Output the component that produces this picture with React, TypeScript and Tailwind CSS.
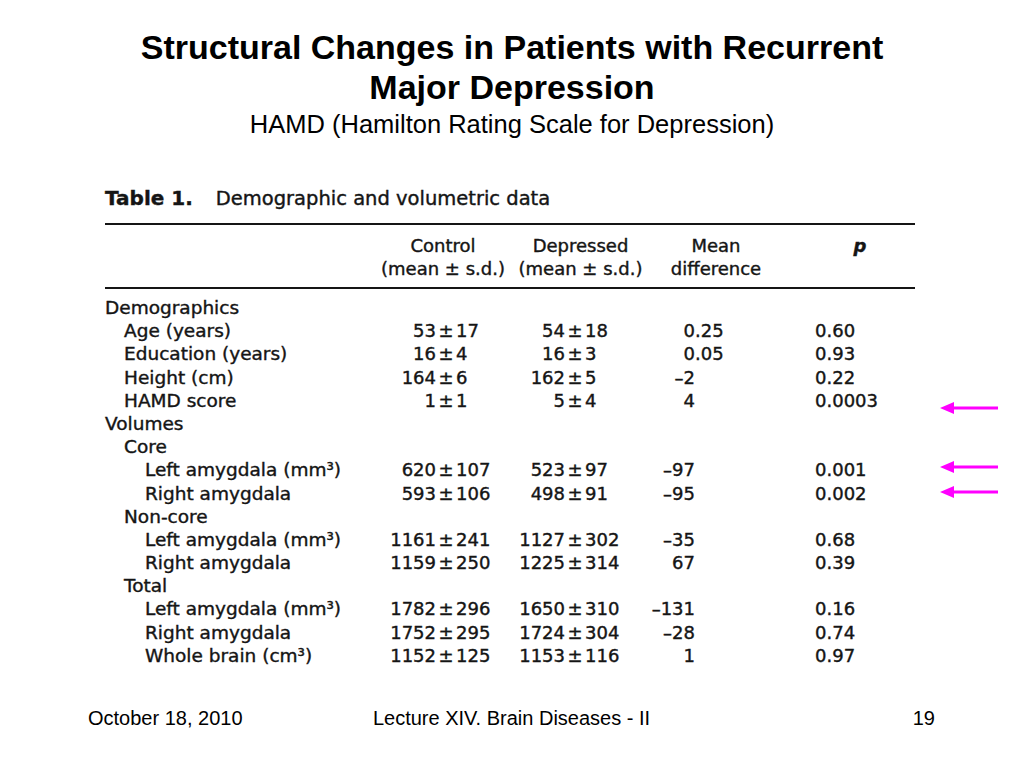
import React from "react";

type Row = {
  label: string;
  level: 0 | 1 | 2;
  c?: [string, string];
  d?: [string, string];
  m?: [string, string];
  p?: string;
};

const rows: Row[] = [
  { label: "Demographics", level: 0 },
  { label: "Age (years)", level: 1, c: ["53", "17"], d: ["54", "18"], m: ["0", ".25"], p: "0.60" },
  { label: "Education (years)", level: 1, c: ["16", "4"], d: ["16", "3"], m: ["0", ".05"], p: "0.93" },
  { label: "Height (cm)", level: 1, c: ["164", "6"], d: ["162", "5"], m: ["–2", ""], p: "0.22" },
  { label: "HAMD score", level: 1, c: ["1", "1"], d: ["5", "4"], m: ["4", ""], p: "0.0003" },
  { label: "Volumes", level: 0 },
  { label: "Core", level: 1 },
  { label: "Left amygdala (mm³)", level: 2, c: ["620", "107"], d: ["523", "97"], m: ["–97", ""], p: "0.001" },
  { label: "Right amygdala", level: 2, c: ["593", "106"], d: ["498", "91"], m: ["–95", ""], p: "0.002" },
  { label: "Non-core", level: 1 },
  { label: "Left amygdala (mm³)", level: 2, c: ["1161", "241"], d: ["1127", "302"], m: ["–35", ""], p: "0.68" },
  { label: "Right amygdala", level: 2, c: ["1159", "250"], d: ["1225", "314"], m: ["67", ""], p: "0.39" },
  { label: "Total", level: 1 },
  { label: "Left amygdala (mm³)", level: 2, c: ["1782", "296"], d: ["1650", "310"], m: ["–131", ""], p: "0.16" },
  { label: "Right amygdala", level: 2, c: ["1752", "295"], d: ["1724", "304"], m: ["–28", ""], p: "0.74" },
  { label: "Whole brain (cm³)", level: 2, c: ["1152", "125"], d: ["1153", "116"], m: ["1", ""], p: "0.97" },
];

const pad = ["pl-0", "pl-[19px]", "pl-[40px]"];

function Arrow() {
  return (
    <svg width="60" height="14" viewBox="0 0 60 14">
      <line x1="10" y1="7" x2="58" y2="7" stroke="#ff00ff" strokeWidth="3" />
      <polygon points="0,7 14,1 14,13" fill="#ff00ff" />
    </svg>
  );
}

export default function App() {
  return (
    <div className="relative w-[1024px] h-[768px] bg-white flex flex-col text-black overflow-hidden">
      <div className="pt-[27px] text-center font-['Liberation_Sans',Arial,sans-serif]">
        <h1 className="text-[34px] leading-[40px] font-bold">
          Structural Changes in Patients with Recurrent
          <br />
          Major Depression
        </h1>
        <p className="mt-[3px] text-[25.5px] leading-[28px]">
          HAMD (Hamilton Rating Scale for Depression)
        </p>
      </div>

      <div className="ml-[105px] w-[810px] mt-[49px] text-[18px] text-[#151515] font-['DejaVu_Sans',sans-serif] [-webkit-text-stroke:0.4px_#151515]">
        <div className="leading-[23px] whitespace-nowrap">
          <span className="font-bold text-[20px]">Table 1.</span>
          <span className="ml-[23px] text-[19.5px]">Demographic and volumetric data</span>
        </div>
        <div className="mt-[13px] h-[2px] bg-[#151515]" />

        <div className="flex pt-[9px] pb-[7px] leading-[23px] whitespace-nowrap">
          <div className="w-[268px]" />
          <div className="w-[140px] text-center">
            Control
            <br />
            (mean ± s.d.)
          </div>
          <div className="w-[135px] text-center">
            Depressed
            <br />
            (mean ± s.d.)
          </div>
          <div className="w-[12px]" />
          <div className="w-[112px] text-center">
            Mean
            <br />
            difference
          </div>
          <div className="ml-[58px] w-[60px] text-center italic font-bold">p</div>
        </div>
        <div className="h-[2px] bg-[#151515]" />

        <div className="pt-[7px]">
          {rows.map((r, i) => (
            <div key={i} className="flex leading-[23.2px] h-[23.2px] whitespace-nowrap">
              <div className={`w-[275px] text-[18.5px] ${pad[r.level]}`}>{r.label}</div>
              <div className="w-[135px] flex">
                {r.c && (
                  <>
                    <span className="w-[56px] text-right">{r.c[0]}</span>
                    <span className="w-[20px] text-center">±</span>
                    <span>{r.c[1]}</span>
                  </>
                )}
              </div>
              <div className="w-[130px] flex">
                {r.d && (
                  <>
                    <span className="w-[50px] text-right">{r.d[0]}</span>
                    <span className="w-[20px] text-center">±</span>
                    <span>{r.d[1]}</span>
                  </>
                )}
              </div>
              <div className="w-[170px] flex">
                {r.m && (
                  <>
                    <span className="w-[50px] text-right">{r.m[0]}</span>
                    <span>{r.m[1]}</span>
                  </>
                )}
              </div>
              <div className="flex-1">{r.p}</div>
            </div>
          ))}
        </div>
      </div>

      <div className="absolute left-[940px] top-[401px]">
        <Arrow />
      </div>
      <div className="absolute left-[940px] top-[460px]">
        <Arrow />
      </div>
      <div className="absolute left-[940px] top-[485px]">
        <Arrow />
      </div>

      <div className="mt-auto mb-[38px] ml-[88px] w-[847px] grid grid-cols-3 text-[20px] leading-[24px] font-['Liberation_Sans',Arial,sans-serif]">
        <div>October 18, 2010</div>
        <div className="text-center">Lecture XIV. Brain Diseases - II</div>
        <div className="text-right">19</div>
      </div>
    </div>
  );
}
